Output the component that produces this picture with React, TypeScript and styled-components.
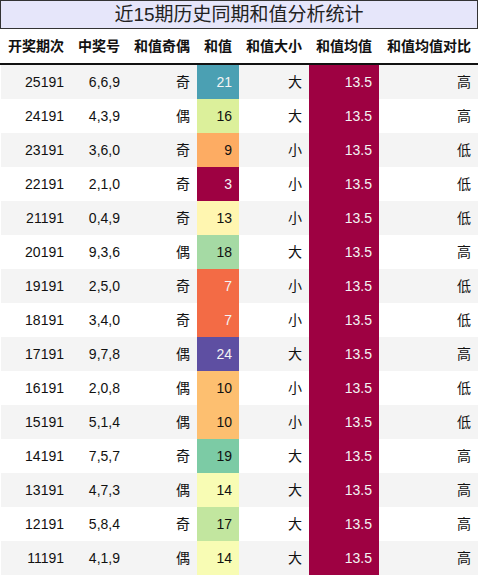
import React, { FC } from "react";
import styled, { createGlobalStyle } from "styled-components";

const GlobalStyle = createGlobalStyle`
  body {
    margin: 0;
    background: #fff;
    font-family: "Liberation Sans", "Noto Sans CJK SC", sans-serif;
    color: #222;
  }
`;

const Wrap = styled.div`
  width: 478px;
`;

const Title = styled.div`
  height: 27px;
  border: 1px solid #333;
  background: #e6e6fa;
  text-align: center;
  font-size: 19px;
  line-height: 28px;
  color: #222;
`;

const cols = "70px 56px 70px 42px 70px 70px 1fr";

const HeadRow = styled.div`
  display: grid;
  grid-template-columns: ${cols};
  height: 34px;
  padding-left: 1px;
  border-bottom: 2px solid #111;
`;

const HeadCell = styled.div`
  padding: 0 7px;
  text-align: right;
  line-height: 35px;
  font-size: 14px;
  font-weight: bold;
  color: #111;
  white-space: nowrap;
`;

const Row = styled.div<{ $alt: boolean }>`
  display: grid;
  grid-template-columns: ${cols};
  height: 34px;
  margin-left: 1px;
  background: ${(p) => (p.$alt ? "#f4f4f4" : "#fff")};
`;

const Cell = styled.div<{ $bg?: string; $light?: boolean }>`
  padding: 0 7px;
  text-align: right;
  line-height: 34px;
  font-size: 14px;
  white-space: nowrap;
  background: ${(p) => p.$bg || "transparent"};
  color: ${(p) => (p.$light ? "#f4f4f4" : "#111")};
`;

interface Draw {
  issue: string;
  nums: string;
  sum: number;
}

const data: Draw[] = [
  { issue: "25191", nums: "6,6,9", sum: 21 },
  { issue: "24191", nums: "4,3,9", sum: 16 },
  { issue: "23191", nums: "3,6,0", sum: 9 },
  { issue: "22191", nums: "2,1,0", sum: 3 },
  { issue: "21191", nums: "0,4,9", sum: 13 },
  { issue: "20191", nums: "9,3,6", sum: 18 },
  { issue: "19191", nums: "2,5,0", sum: 7 },
  { issue: "18191", nums: "3,4,0", sum: 7 },
  { issue: "17191", nums: "9,7,8", sum: 24 },
  { issue: "16191", nums: "2,0,8", sum: 10 },
  { issue: "15191", nums: "5,1,4", sum: 10 },
  { issue: "14191", nums: "7,5,7", sum: 19 },
  { issue: "13191", nums: "4,7,3", sum: 14 },
  { issue: "12191", nums: "5,8,4", sum: 17 },
  { issue: "11191", nums: "4,1,9", sum: 14 },
];

const sumColors: Record<number, string> = {
  3: "#9e0142",
  7: "#f36b45",
  9: "#fdac63",
  10: "#fdbf70",
  13: "#fff6b0",
  14: "#f8fcb4",
  16: "#dcf09b",
  17: "#c2e69f",
  18: "#a5daa4",
  19: "#7ccba5",
  21: "#4ba0b3",
  24: "#5e4fa2",
};

const darkSums = [3, 7, 21, 24];
const avg = 13.5;

const headers = ["开奖期次", "中奖号", "和值奇偶", "和值", "和值大小", "和值均值", "和值均值对比"];

const App: FC = () => {
  return (
    <Wrap>
      <GlobalStyle />
      <Title>近15期历史同期和值分析统计</Title>
      <HeadRow>
        {headers.map((h) => (
          <HeadCell key={h}>{h}</HeadCell>
        ))}
      </HeadRow>
      {data.map((d, i) => (
        <Row key={d.issue} $alt={i % 2 === 0}>
          <Cell>{d.issue}</Cell>
          <Cell>{d.nums}</Cell>
          <Cell>{d.sum % 2 ? "奇" : "偶"}</Cell>
          <Cell $bg={sumColors[d.sum]} $light={darkSums.includes(d.sum)}>
            {d.sum}
          </Cell>
          <Cell>{d.sum >= 14 ? "大" : "小"}</Cell>
          <Cell $bg="#9e0142" $light>
            {avg}
          </Cell>
          <Cell>{d.sum > avg ? "高" : "低"}</Cell>
        </Row>
      ))}
    </Wrap>
  );
};

export default App;
